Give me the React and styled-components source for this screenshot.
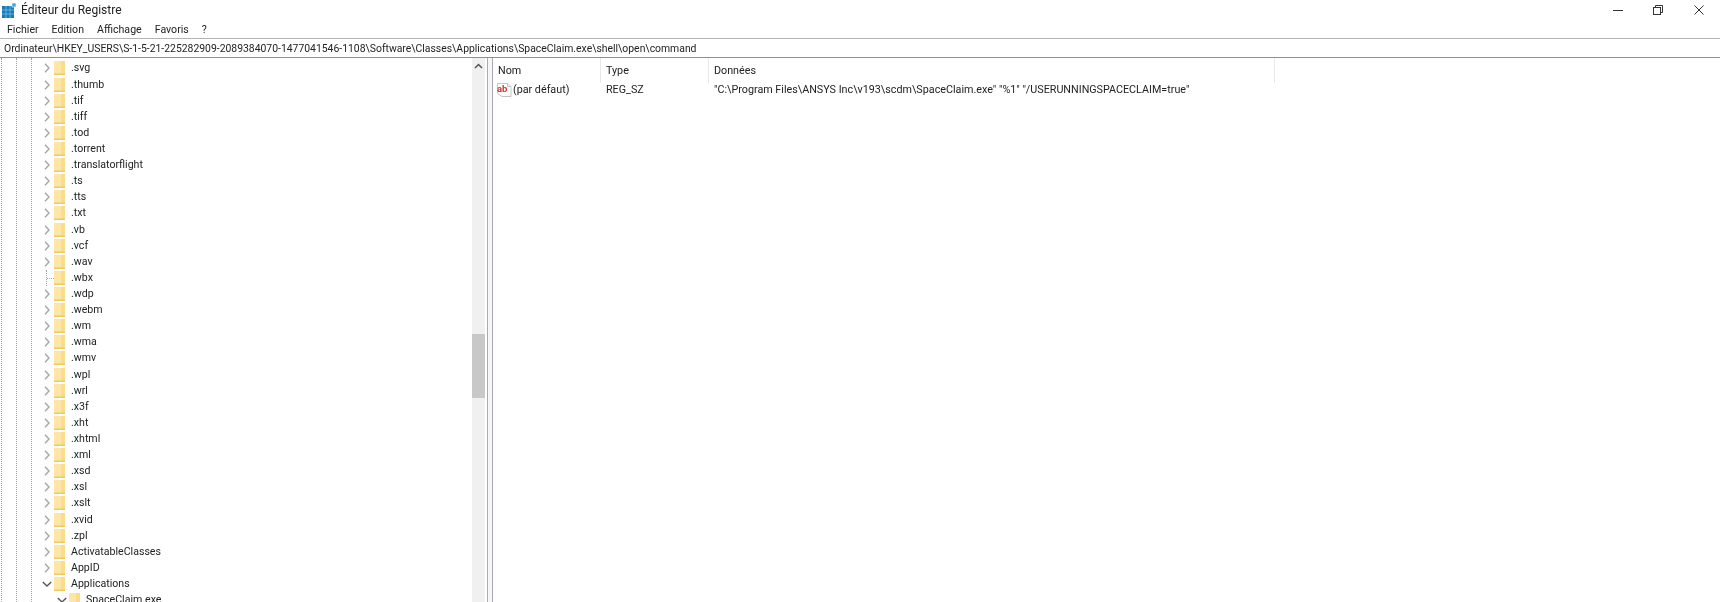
import React from "react";
import styled, { createGlobalStyle } from "styled-components";

const Global = createGlobalStyle`
  html, body { margin: 0; padding: 0; background: #fff; overflow: hidden; }
  body { font-family: Roboto, "Noto Sans", sans-serif; font-size: 11px; color: #222; }
`;
const Window = styled.div`
  width: 1720px; height: 602px; display: flex; flex-direction: column; overflow: hidden; background: #fff; filter: blur(0.3px);
`;
const TitleBar = styled.div`
  height: 20px; display: flex; align-items: center; padding-left: 2px; flex: none;
`;
const AppTitle = styled.span`
  margin-left: 4px; font-size: 12px; color: #222;
`;
const WinButtons = styled.div`
  margin-left: auto; display: flex; align-items: center; height: 20px; margin-right: 1px;
`;
const WinButton = styled.div`
  width: 40.5px; height: 20px; display: flex; align-items: center; justify-content: center;
  svg { display: block; }
`;
const MenuBar = styled.div`
  height: 18px; display: flex; align-items: center; gap: 13px; padding-left: 7px; flex: none; font-size: 10.6px; color: #222;
`;
const AddressBar = styled.div`
  height: 18px; flex: none; display: flex; align-items: center; padding-left: 4px;
  border-top: 1px solid #b4b4b4; border-bottom: 1.5px solid #8f8f8f; font-size: 10.4px; color: #222; white-space: nowrap;
`;
const Panes = styled.div`
  flex: 1; display: flex; min-height: 0;
`;
const TreePane = styled.div`
  width: 472px; flex: none; position: relative; overflow: hidden; padding-top: 2.4px;
`;
const Guide = styled.i`
  position: absolute; top: 0; bottom: 0; left: ${p => p.$x}px; border-left: 1px dotted #a0a0a0;
`;
const Row = styled.div`
  height: 16.12px; display: flex; align-items: center; position: relative; padding-left: ${p => 39 + p.$level * 15}px; white-space: nowrap;
`;
const Toggle = styled.span`
  width: 15px; height: 16px; flex: none; display: flex; align-items: center; justify-content: center; position: relative;
`;
const Branch = styled.i`
  position: absolute; left: 7px; top: 0; bottom: 0; width: 7px;
  border-left: 1px dotted #a0a0a0;
  &::after { content: ""; position: absolute; left: 0; right: 0; top: 8px; border-top: 1px dotted #a0a0a0; }
`;
const FolderBox = styled.span`
  width: 11px; height: 14px; flex: none; margin-right: 6px; display: block;
  svg { display: block; }
`;
const Label = styled.span`
  font-size: 10.6px; color: #222; line-height: 16px;
`;
const Scrollbar = styled.div`
  width: 13px; flex: none; background: #f0f0f0; display: flex; flex-direction: column; align-items: center;
`;
const ScrollUp = styled.div`
  height: 17px; width: 100%; display: flex; align-items: center; justify-content: center; flex: none;
`;
const Thumb = styled.div`
  width: 100%; height: 64px; background: #c8c8c8; margin-top: 259px; flex: none;
`;
const Splitter = styled.div`
  width: 4px; flex: none; margin-left: 2px; border-left: 1px solid #a9a9b4; border-right: 1px solid #a9a9b4; background: #f6f6f6;
`;
const ValuePane = styled.div`
  flex: 1; min-width: 0; display: flex; flex-direction: column;
`;
const HeaderRow = styled.div`
  height: 25px; display: flex; align-items: stretch; flex: none;
`;
const HeaderCell = styled.div`
  width: ${p => p.$w}px; flex: none; padding-left: 5px; box-sizing: border-box; display: flex; align-items: center;
  border-right: 1px solid #e8e8e8; font-size: 10.75px; color: #222;
`;
const ValueRow = styled.div`
  height: 13px; display: flex; align-items: center; white-space: nowrap; font-size: 10.75px; color: #222;
`;
const ValueCell = styled.div`
  width: ${p => p.$w}px; flex: none; padding-left: ${p => p.$pad}px; box-sizing: border-box; display: flex; align-items: center;
`;

const Chevron = ({ open }) => (
  <svg width="10" height="10" viewBox="0 0 10 10" fill="none" stroke={open ? "#555" : "#a6a6a6"} strokeWidth="1.4">
    {open ? <path d="M0.8 3 L5 7 L9.2 3" /> : <path d="M3 0.8 L7 5 L3 9.2" />}
  </svg>
);
const Folder = () => (
  <svg width="11" height="14" viewBox="0 0 11 14">
    <rect x="0" y="0" width="11" height="14" fill="#fbdc8a" />
    <rect x="0" y="0" width="7" height="14" fill="#fde6a6" />
    <rect x="0" y="12.5" width="11" height="1.5" fill="#f2c860" />
  </svg>
);
const AbIcon = () => (
  <svg width="16" height="14" viewBox="0 0 16 14" style={{ flex: "none", marginRight: 1 }}>
    <path d="M1.5 0.5 H11.5 L15 3.5 V13.5 H6 L1.5 10.5 Z" fill="#fff" stroke="#c4c4c4" />
    <path d="M11.5 0.5 V3.5 H15" fill="#f0f0f0" stroke="#c4c4c4" />
    <text x="1" y="8.5" fontFamily="Roboto, sans-serif" fontWeight="700" fontSize="9.5" fill="#cf3a2c">ab</text>
  </svg>
);
const RegIcon = () => (
  <svg width="15" height="15" viewBox="0 0 15 15" style={{ flex: "none" }}>
    <rect x="0" y="3" width="12" height="12" fill="#1b79b8" />
    <path d="M4 3 V15 M8 3 V15 M0 7 H12 M0 11 H12" stroke="#6cc0ea" strokeWidth="0.8" />
    <rect x="10" y="0" width="4" height="4" fill="#3aa8de" stroke="#fff" strokeWidth="0.6" />
  </svg>
);

const items = [".svg", ".thumb", ".tif", ".tiff", ".tod", ".torrent", ".translatorflight", ".ts", ".tts", ".txt", ".vb", ".vcf", ".wav", ".wbx", ".wdp", ".webm", ".wm", ".wma", ".wmv", ".wpl", ".wrl", ".x3f", ".xht", ".xhtml", ".xml", ".xsd", ".xsl", ".xslt", ".xvid", ".zpl", "ActivatableClasses", "AppID", "Applications"];

export default function App() {
  return (
    <Window>
      <Global />
      <TitleBar>
        <RegIcon />
        <AppTitle>Éditeur du Registre</AppTitle>
        <WinButtons>
          <WinButton>
            <svg width="12" height="12" viewBox="0 0 12 12"><path d="M1 6.5 H11" stroke="#333" /></svg>
          </WinButton>
          <WinButton>
            <svg width="12" height="12" viewBox="0 0 12 12" fill="none" stroke="#333"><rect x="1.5" y="3.5" width="7" height="7" /><path d="M3.5 3.5 V1.5 H10.5 V8.5 H8.5" /></svg>
          </WinButton>
          <WinButton>
            <svg width="12" height="12" viewBox="0 0 12 12" fill="none" stroke="#333"><path d="M1.5 1.5 L10.5 10.5 M10.5 1.5 L1.5 10.5" /></svg>
          </WinButton>
        </WinButtons>
      </TitleBar>
      <MenuBar>
        <span>Fichier</span><span>Edition</span><span>Affichage</span><span>Favoris</span><span>?</span>
      </MenuBar>
      <AddressBar>Ordinateur\HKEY_USERS\S-1-5-21-225282909-2089384070-1477041546-1108\Software\Classes\Applications\SpaceClaim.exe\shell\open\command</AddressBar>
      <Panes>
        <TreePane>
          <Guide $x={1} /><Guide $x={16} /><Guide $x={31} />
          {items.map((name) => (
            <Row key={name} $level={0}>
              <Toggle>{name === ".wbx" ? <Branch /> : <Chevron open={name === "Applications"} />}</Toggle>
              <FolderBox><Folder /></FolderBox>
              <Label>{name}</Label>
            </Row>
          ))}
          <Row $level={1}>
            <Toggle><Chevron open /></Toggle>
            <FolderBox><Folder /></FolderBox>
            <Label>SpaceClaim.exe</Label>
          </Row>
        </TreePane>
        <Scrollbar>
          <ScrollUp>
            <svg width="9" height="9" viewBox="0 0 9 9" fill="none" stroke="#555" strokeWidth="1.5"><path d="M1 6 L4.5 2.5 L8 6" /></svg>
          </ScrollUp>
          <Thumb />
        </Scrollbar>
        <Splitter />
        <ValuePane>
          <HeaderRow>
            <HeaderCell $w={108}>Nom</HeaderCell>
            <HeaderCell $w={108}>Type</HeaderCell>
            <HeaderCell $w={566}>Données</HeaderCell>
          </HeaderRow>
          <ValueRow>
            <ValueCell $w={108} $pad={3}><AbIcon />(par défaut)</ValueCell>
            <ValueCell $w={108} $pad={5}>REG_SZ</ValueCell>
            <ValueCell $w={566} $pad={5}>"C:\Program Files\ANSYS Inc\v193\scdm\SpaceClaim.exe" "%1" "/USERUNNINGSPACECLAIM=true"</ValueCell>
          </ValueRow>
        </ValuePane>
      </Panes>
    </Window>
  );
}
